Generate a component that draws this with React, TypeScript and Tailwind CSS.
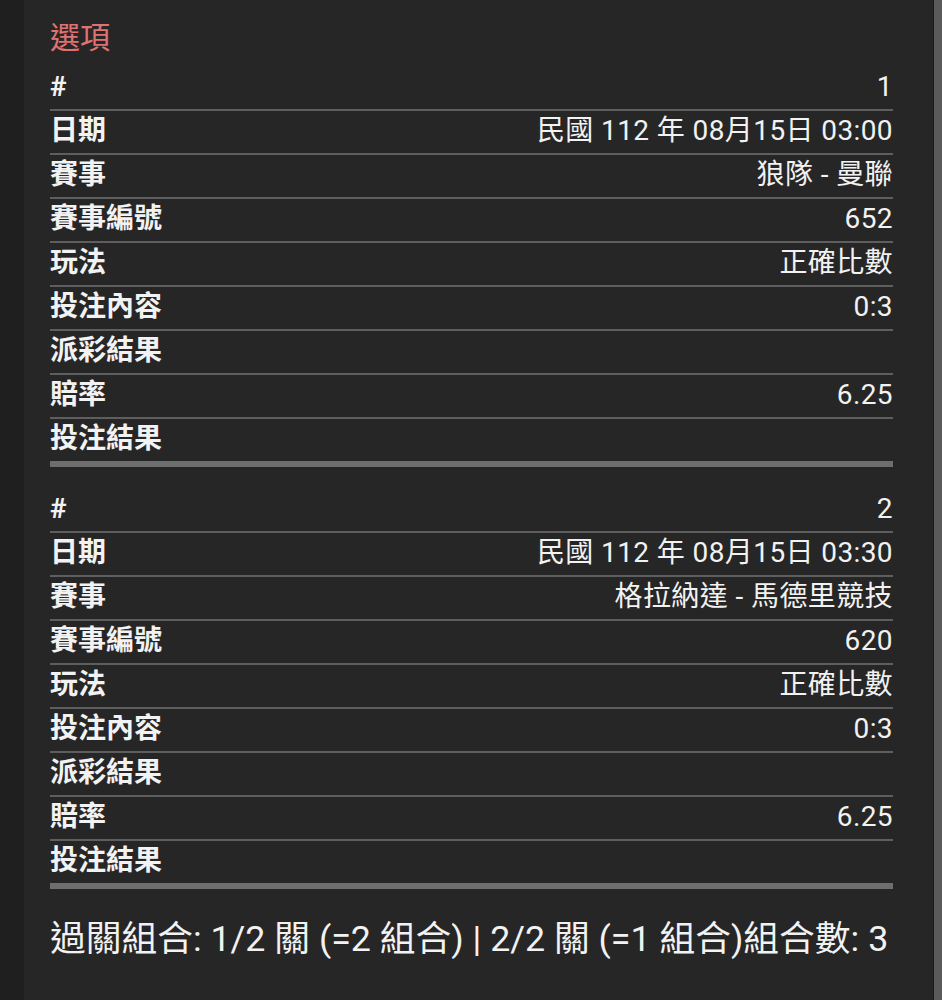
import React from "react";

interface Bet {
  no: number;
  date: string;
  match: string;
  matchNo: string;
  play: string;
  content: string;
  payout: string;
  odds: string;
  result: string;
}

const bets: Bet[] = [
  {
    no: 1,
    date: "民國 112 年 08月15日 03:00",
    match: "狼隊 - 曼聯",
    matchNo: "652",
    play: "正確比數",
    content: "0:3",
    payout: "",
    odds: "6.25",
    result: "",
  },
  {
    no: 2,
    date: "民國 112 年 08月15日 03:30",
    match: "格拉納達 - 馬德里競技",
    matchNo: "620",
    play: "正確比數",
    content: "0:3",
    payout: "",
    odds: "6.25",
    result: "",
  },
];

const Row = ({
  label,
  value,
  last,
}: {
  label: string;
  value: string | number;
  last?: boolean;
}) => (
  <div
    className={`flex items-center justify-between pb-[2px] ${
      last
        ? "h-[48px] border-b-[6px] border-[#6e6e6e]"
        : "h-[44px] border-b-2 border-[#5e5e5e]"
    }`}
  >
    <div className="font-bold">{label}</div>
    <div className="tracking-[0.4px]">{value}</div>
  </div>
);

const BetTable = ({ bet }: { bet: Bet }) => (
  <div className="flex flex-col">
    <Row label="#" value={bet.no} />
    <Row label="日期" value={bet.date} />
    <Row label="賽事" value={bet.match} />
    <Row label="賽事編號" value={bet.matchNo} />
    <Row label="玩法" value={bet.play} />
    <Row label="投注內容" value={bet.content} />
    <Row label="派彩結果" value={bet.payout} />
    <Row label="賠率" value={bet.odds} />
    <Row label="投注結果" value={bet.result} last />
  </div>
);

const App = () => {
  return (
    <div
      className="flex min-h-[1000px] w-full bg-[#1f1f1f] text-[#f2f2f2]"
      style={{ fontFamily: "Roboto, 'Noto Sans CJK TC', sans-serif" }}
    >
      <div className="w-[24px] shrink-0" />
      <div className="flex flex-1 flex-col bg-[#262626] pt-[18px] pr-[40px] pl-[26px] text-[28px]">
        <div className="text-[30px] leading-[40px] text-[#e07372]">選項</div>
        <div className="mt-[9px] flex flex-col gap-[22px]">
          {bets.map((bet) => (
            <BetTable key={bet.no} bet={bet} />
          ))}
        </div>
        <div className="mt-[28px] text-[35.75px] leading-[44px] whitespace-nowrap">
          過關組合: 1/2 關 (=2 組合) | 2/2 關 (=1 組合)組合數: 3
        </div>
      </div>
      <div className="w-[9px] shrink-0 border-l border-[#1a1a1a] bg-[#5a5a5a]" />
    </div>
  );
};

export default App;
